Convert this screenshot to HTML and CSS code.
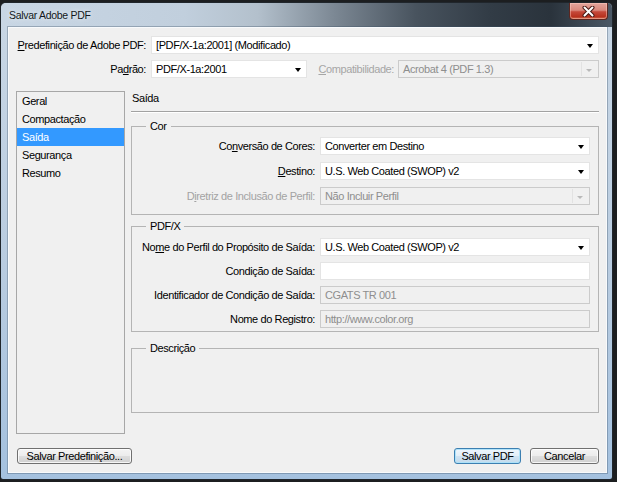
FILE: index.html
```html
<!DOCTYPE html>
<html lang="pt">
<head>
<meta charset="utf-8">
<title>Salvar Adobe PDF</title>
<link rel="stylesheet" href="styles.css">
</head>
<body>
<div class="window">
  <div class="titlebar">
    <span class="title">Salvar Adobe PDF</span>
    <span class="close">
      <svg width="13" height="11" viewBox="0 0 13 11">
        <path d="M2.5 1.5 L10.5 9.5 M10.5 1.5 L2.5 9.5" stroke="#4a1a14" stroke-width="4" stroke-linecap="round" fill="none"/>
        <path d="M2.5 1.5 L10.5 9.5 M10.5 1.5 L2.5 9.5" stroke="#ffffff" stroke-width="2" stroke-linecap="round" fill="none"/>
      </svg>
    </span>
  </div>
  <div class="client">
    <div class="top">
      <div class="row">
        <span class="lbl-main"><u>P</u>redefinição de Adobe PDF:</span>
        <div class="select grow">[PDF/X-1a:2001] (Modificado)<i class="arrow"></i></div>
      </div>
      <div class="row">
        <span class="lbl-main">Pa<u>d</u>rão:</span>
        <div class="select std">PDF/X-1a:2001<i class="arrow"></i></div>
        <span class="compat"><u>C</u>ompatibilidade:</span>
        <div class="select disabled compat-field">Acrobat 4 (PDF 1.3)<i class="arrow"></i></div>
      </div>
    </div>

    <div class="main">
      <ul class="nav">
        <li>Geral</li>
        <li>Compactação</li>
        <li class="sel">Saída</li>
        <li>Segurança</li>
        <li>Resumo</li>
      </ul>
      <div class="pane">
        <div class="pane-title">Saída</div>

        <fieldset class="group cor">
          <legend>Cor</legend>
          <div class="frow">
            <span class="flbl">Co<u>n</u>versão de Cores:</span>
            <div class="select grow">Converter em Destino<i class="arrow"></i></div>
          </div>
          <div class="frow">
            <span class="flbl"><u>D</u>estino:</span>
            <div class="select grow">U.S. Web Coated (SWOP) v2<i class="arrow"></i></div>
          </div>
          <div class="frow">
            <span class="flbl dim">D<u>i</u>retriz de Inclusão de Perfil:</span>
            <div class="select disabled grow">Não Incluir Perfil<i class="arrow"></i></div>
          </div>
        </fieldset>

        <fieldset class="group pdfx">
          <legend>PDF/X</legend>
          <div class="frow">
            <span class="flbl">No<u>m</u>e do Perfil do Propósito de Saída:</span>
            <div class="select grow">U.S. Web Coated (SWOP) v2<i class="arrow"></i></div>
          </div>
          <div class="frow">
            <span class="flbl">Condição de Saída:</span>
            <div class="input grow"></div>
          </div>
          <div class="frow">
            <span class="flbl">Identificador de Condição de Saída:</span>
            <div class="input disabled grow">CGATS TR 001</div>
          </div>
          <div class="frow">
            <span class="flbl">Nome do Registro:</span>
            <div class="input disabled grow">http://www.color.org</div>
          </div>
        </fieldset>

        <fieldset class="group desc">
          <legend>Descrição</legend>
          <div class="desc-body"></div>
        </fieldset>
      </div>
    </div>

    <div class="buttons">
      <button class="btn btn-preset">Salvar Predefinição...</button>
      <span class="spacer"></span>
      <button class="btn btn-default btn-save">Salvar PDF</button>
      <button class="btn btn-cancel">Cancelar</button>
    </div>
  </div>
</div>
</body>
</html>
```

FILE: styles.css
```css
* { box-sizing: border-box; }

html, body { margin: 0; padding: 0; }

body {
  width: 617px;
  height: 482px;
  overflow: hidden;
  background: #1c1e20;
  font: 11px/14px "Liberation Sans", Arial, sans-serif;
  letter-spacing: -0.4px;
  color: #000;
}

u { text-decoration: underline; text-underline-offset: 1px; }

.window {
  margin-top: 2px;
  width: 613px;
  height: 478px;
  border: 1px solid #20262c;
  border-radius: 6px 6px 3px 3px;
  background: linear-gradient(180deg, #c9d7e5 0%, #b9cce0 55%, #a4c1df 100%);
  display: flex;
  flex-direction: column;
}

.titlebar {
  flex: none;
  height: 24px;
  display: flex;
  align-items: flex-start;
  padding: 0 4px 0 8px;
  border-radius: 5px 5px 0 0;
  background: linear-gradient(90deg, #c8d6e4 0%, #c1cfdd 30%, #b3c0cc 42%, #7a8692 55%, #48535e 68%, #323c46 80%, #2a333c 90%, #4b5865 100%);
}

.title {
  font-size: 10.5px;
  line-height: 24px;
  color: #121820;
  letter-spacing: -0.3px;
  text-shadow: 0 0 5px rgba(255, 255, 255, 0.85);
}

.close {
  margin-left: auto;
  width: 39px;
  height: 17px;
  display: flex;
  align-items: center;
  justify-content: center;
  border: 1px solid #5b2620;
  border-top: none;
  border-radius: 0 0 4px 4px;
  background: linear-gradient(180deg, #e3a59c 0%, #d9887c 45%, #c5493a 55%, #b8321f 85%, #cf6a4c 100%);
  box-shadow: inset 0 0 0 1px rgba(255, 210, 200, 0.45);
}

.client {
  margin: 0 5px 0 7px;
  height: 446px;
  background: #f0f0f0;
  border: 1px solid #f8fafc;
  box-shadow: 0 0 0 1px rgba(60, 80, 100, 0.35);
  padding: 8px 7px 0 0;
}

/* top rows */
.row {
  display: flex;
  align-items: center;
  height: 18px;
}
.row + .row { margin-top: 6px; }

.lbl-main {
  width: 137px;
  margin-right: 5px;
  text-align: right;
  white-space: nowrap;
  flex: none;
}

.select, .input {
  position: relative;
  height: 18px;
  background: #fff;
  border: 1px solid #e4e4e4;
  padding: 0 18px 0 4px;
  line-height: 16px;
  white-space: nowrap;
  overflow: hidden;
}

.grow { flex: 1; min-width: 0; }
.std { width: 156px; flex: none; }

.compat {
  flex: 1;
  text-align: right;
  margin-right: 4px;
  color: #a6a6a6;
  white-space: nowrap;
}
.compat-field { width: 201px; flex: none; }

.select.disabled, .input.disabled {
  background: #f0f0f0;
  border-color: #cbcbcb;
  color: #8e8e8e;
}

.arrow {
  position: absolute;
  right: 5px;
  top: 7px;
  width: 0;
  height: 0;
  border-left: 3.5px solid transparent;
  border-right: 3.5px solid transparent;
  border-top: 4px solid #000;
}

.select.disabled .arrow {
  border-top-color: #b9b9b9;
  border-left-width: 3px;
  border-right-width: 3px;
  border-top-width: 3px;
  right: 6px;
  top: 8px;
}
.select.disabled::before {
  content: "";
  position: absolute;
  right: 16px;
  top: 1px;
  bottom: 1px;
  width: 1px;
  background: #e2e2e2;
}

/* main area */
.main {
  display: flex;
  margin-top: 13px;
  height: 343px;
}

.nav {
  list-style: none;
  margin: 0 0 0 7px;
  padding: 0;
  width: 109px;
  flex: none;
  border: 1px solid #a7a7a7;
  background: #f0f0f0;
}
.nav li {
  height: 18px;
  line-height: 18px;
  padding-left: 5px;
}
.nav li.sel {
  background: #3399ff;
  color: #fff;
}

.pane {
  flex: 1;
  margin-left: 6px;
  display: flex;
  flex-direction: column;
}

.pane-title {
  height: 21px;
  padding-left: 1px;
  line-height: 14px;
  border-bottom: 1px solid #a2a2a2;
  box-shadow: 0 1px 0 #ffffff;
}

.group {
  margin: 7px 0 0;
  padding: 4px 8px 9px 0;
  border: 1px solid #b4b4b4;
  min-inline-size: 0;
}
.group legend {
  margin-left: 14px;
  padding: 0 4px;
  line-height: 14px;
}

.pdfx {
  margin-top: 4px;
  padding-top: 5px;
  padding-bottom: 3px;
}
.desc {
  margin-top: 9px;
  padding: 0;
}
.desc-body { height: 57px; }

.frow {
  display: flex;
  align-items: center;
  height: 18px;
}
.cor .frow + .frow { margin-top: 7px; }
.pdfx .frow + .frow { margin-top: 6px; }

.flbl {
  width: 183px;
  margin-right: 5px;
  text-align: right;
  white-space: nowrap;
  flex: none;
}
.flbl.dim { color: #a3a3a3; }

/* buttons */
.buttons {
  display: flex;
  margin: 14px 0 0 8px;
  height: 16px;
}
.spacer { flex: 1; }

.btn {
  height: 16px;
  padding: 0;
  font: inherit;
  letter-spacing: inherit;
  line-height: 14px;
  color: #000;
  text-align: center;
  border: 1px solid #707070;
  border-radius: 3px;
  background: linear-gradient(180deg, #f4f4f4 0%, #ececec 50%, #dedede 50%, #d0d0d0 100%);
  box-shadow: inset 0 0 0 1px rgba(255, 255, 255, 0.8);
}
.btn-preset { width: 115px; }
.btn-save { width: 67px; }
.btn-cancel { width: 69px; margin-left: 9px; }
.btn-default {
  border-color: #3c7fb1;
  background: linear-gradient(180deg, #eef6fc 0%, #e2eef8 50%, #d0e3f2 50%, #c3daec 100%);
  box-shadow: inset 0 0 0 1px rgba(170, 225, 250, 0.9);
}
```
